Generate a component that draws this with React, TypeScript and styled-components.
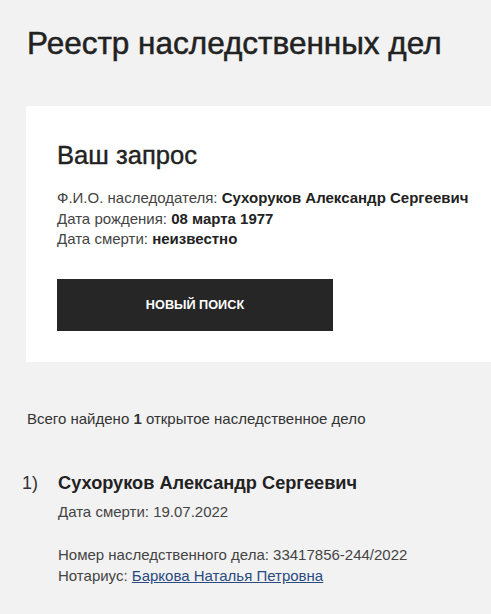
import * as React from 'react';
import styled, { createGlobalStyle } from 'styled-components';

const GlobalStyle = createGlobalStyle`
  html, body {
    margin: 0;
    padding: 0;
    background: #f2f2f2;
  }
  body {
    font-family: "Liberation Sans", Arial, sans-serif;
    color: #222;
  }
`;

const Page = styled.div`
  padding: 24px 0 0 26px;
  width: 491px;
  box-sizing: border-box;
  overflow: hidden;
`;

const Title = styled.h1`
  margin: 0 0 44px 1px;
  font-size: 31.5px;
  font-weight: 400;
  line-height: 38px;
  color: #222;
  -webkit-text-stroke: 0.5px #222;
`;

const Card = styled.section`
  background: #fff;
  padding: 35px 0 31px 31px;
`;

const CardTitle = styled.h2`
  margin: 0 0 19px;
  font-size: 25.6px;
  font-weight: 400;
  line-height: 28px;
  color: #222;
  -webkit-text-stroke: 0.4px #222;
`;

const Info = styled.div`
  font-size: 15px;
  line-height: 20.5px;
  color: #444;
  white-space: nowrap;

  b {
    color: #222;
  }
`;

const Button = styled.button`
  display: block;
  margin-top: 29px;
  width: 276px;
  height: 52px;
  border: 0;
  background: #262626;
  color: #fff;
  font-family: "Liberation Sans", Arial, sans-serif;
  font-size: 12.7px;
  font-weight: 700;
  text-transform: uppercase;
  cursor: pointer;
`;

const Summary = styled.p`
  margin: 47px 0 0 1px;
  font-size: 15px;
  line-height: 20px;
  color: #333;
`;

const Result = styled.div`
  display: flex;
  margin-top: 42px;
`;

const Index = styled.div`
  width: 36px;
  flex: 0 0 auto;
  margin-left: -4px;
  font-size: 18px;
  line-height: 24px;
  color: #333;
`;

const Body = styled.div`
  display: flex;
  flex-direction: column;
`;

const Name = styled.div`
  font-size: 18.2px;
  font-weight: 700;
  line-height: 24px;
  color: #222;
`;

const Line = styled.div<{ $gap?: number }>`
  margin-top: ${p => p.$gap || 0}px;
  font-size: 15px;
  line-height: 21px;
  color: #444;
`;

const Link = styled.a`
  color: #2a4a80;
  text-decoration: underline;
`;

const App: React.FC = () => (
  <>
    <GlobalStyle />
    <Page>
      <Title>Реестр наследственных дел</Title>
      <Card>
        <CardTitle>Ваш запрос</CardTitle>
        <Info>
          <div>Ф.И.О. наследодателя: <b>Сухоруков Александр Сергеевич</b></div>
          <div>Дата рождения: <b>08 марта 1977</b></div>
          <div>Дата смерти: <b>неизвестно</b></div>
        </Info>
        <Button>Новый поиск</Button>
      </Card>
      <Summary>
        Всего найдено <b>1</b> открытое наследственное дело
      </Summary>
      <Result>
        <Index>1)</Index>
        <Body>
          <Name>Сухоруков Александр Сергеевич</Name>
          <Line $gap={6}>Дата смерти: 19.07.2022</Line>
          <Line $gap={22}>Номер наследственного дела: 33417856-244/2022</Line>
          <Line>
            Нотариус: <Link href="#">Баркова Наталья Петровна</Link>
          </Line>
        </Body>
      </Result>
    </Page>
  </>
);

export default App;
